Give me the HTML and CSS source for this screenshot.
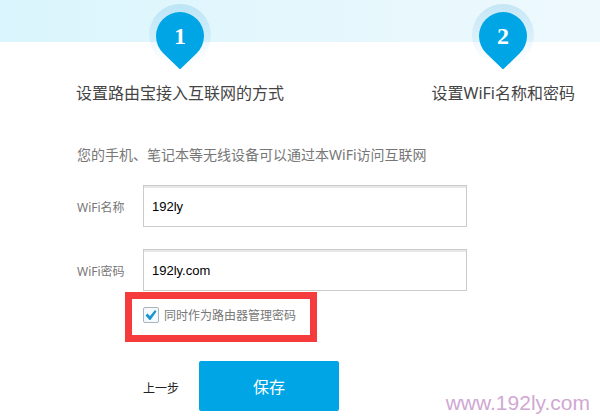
FILE: index.html
```
<!DOCTYPE html>
<html lang="zh-CN">
<head>
  <meta charset="UTF-8">
  <meta name="viewport" content="width=device-width, initial-scale=1.0">
  <title>设置WiFi名称和密码</title>
  <link rel="stylesheet" href="styles.css">
</head>
<body>
  <header class="steps">
    <div class="step">
      <svg class="pin" viewBox="0 0 62 66" aria-hidden="true">
        <defs>
          <linearGradient id="halo" x1="0" y1="0" x2="0" y2="1">
            <stop offset="0" stop-color="#0088d0" stop-opacity="0.16"/>
            <stop offset="1" stop-color="#0088d0" stop-opacity="0"/>
          </linearGradient>
        </defs>
        <circle cx="31" cy="31" r="31" fill="url(#halo)"/>
        <path d="M30 64.5 L14.5 49.5 A24 24 0 1 1 47.5 49.5 L32 64.5 Q31 65.5 30 64.5 Z" fill="#00a5e6"/>
        <text x="31" y="40" text-anchor="middle">1</text>
      </svg>
      <div class="step-name">设置路由宝接入互联网的方式</div>
    </div>
    <div class="step">
      <svg class="pin" viewBox="0 0 62 66" aria-hidden="true">
        <circle cx="31" cy="31" r="31" fill="url(#halo)"/>
        <path d="M30 64.5 L14.5 49.5 A24 24 0 1 1 47.5 49.5 L32 64.5 Q31 65.5 30 64.5 Z" fill="#00a5e6"/>
        <text x="31" y="40" text-anchor="middle">2</text>
      </svg>
      <div class="step-name">设置WiFi名称和密码</div>
    </div>
  </header>

  <form class="wifi-form">
    <p class="hint">您的手机、笔记本等无线设备可以通过本WiFi访问互联网</p>

    <div class="field">
      <label for="wifi-name">WiFi名称</label>
      <input type="text" id="wifi-name" value="192ly">
    </div>
    <div class="field">
      <label for="wifi-password">WiFi密码</label>
      <input type="text" id="wifi-password" value="192ly.com">
    </div>

    <label class="same-password">
      <input type="checkbox" checked>
      <span>同时作为路由器管理密码</span>
    </label>

    <div class="actions">
      <a class="back" href="#">上一步</a>
      <button class="save" type="button">保存</button>
      <span class="site">www.192ly.com</span>
    </div>
  </form>
</body>
</html>
```
FILE: styles.css
```
* {
  box-sizing: border-box;
}

body {
  margin: 0;
  font-family: "Noto Sans", "Noto Sans CJK SC", sans-serif;
  font-size: 12px;
  color: #777;
  background: #fff;
}

/* Steps */
.steps {
  display: flex;
  justify-content: space-between;
  padding: 4px 25px 0 76px;
  background: linear-gradient(to right, #daf5fd, #eef9fd) no-repeat;
  background-size: 100% 42px;
}

.step {
  display: flex;
  flex-direction: column;
  align-items: center;
}

.pin {
  width: 62px;
  height: 66px;
}

.pin text {
  font-family: "Liberation Serif", serif;
  font-size: 24px;
  font-weight: bold;
  fill: #fff;
}

.step-name {
  margin-top: 11px;
  font-size: 16px;
  line-height: 24px;
  color: #444;
  white-space: nowrap;
}

/* Form */
.wifi-form {
  padding: 39px 10px 0 77px;
}

.hint {
  margin: 0 0 19px;
  font-size: 14px;
  line-height: 22px;
}

.field {
  display: flex;
  align-items: center;
  margin-bottom: 22px;
}

.field label {
  width: 66px;
  padding-top: 2px;
}

.field input {
  flex: 1;
  max-width: 324px;
  height: 42px;
  padding: 0 8px;
  border: 1px solid #ccc;
  border-radius: 0;
  box-shadow: inset 0 2px 0 #e8e8e8;
  font-family: "Liberation Sans", sans-serif;
  font-size: 13px;
  color: #000;
  outline: none;
}

.same-password {
  display: flex;
  align-items: center;
  gap: 5px;
  width: fit-content;
  height: 50px;
  margin: -21px 0 19px 48px;
  padding: 0 14px 4px 11px;
  border: 7px solid #f53b3b;
}

.same-password input {
  appearance: none;
  width: 16px;
  height: 16px;
  margin: 0;
  border: 1px solid #aab4bb;
  border-radius: 2px;
  background: #f4fafd url("data:image/svg+xml,%3Csvg xmlns='http://www.w3.org/2000/svg' viewBox='0 0 14 14'%3E%3Cpath d='M1.5 7.5 L3.5 5.5 L6 8 L11 2 L12.5 3.5 L6.5 12 L5.5 12 Z' fill='%231b94cf'/%3E%3C/svg%3E") center / 14px no-repeat;
}

.actions {
  display: flex;
  align-items: flex-start;
  padding-left: 66px;
}

.back {
  width: 56px;
  padding-top: 19px;
  line-height: 18px;
  color: #222;
  text-decoration: none;
}

.save {
  width: 140px;
  height: 50px;
  border: 0;
  border-radius: 2px;
  background: #00a5e6;
  font-family: inherit;
  font-size: 16px;
  color: #fff;
  cursor: pointer;
}

.site {
  margin-left: auto;
  padding-top: 30px;
  font-family: "Liberation Sans", sans-serif;
  font-size: 21px;
  line-height: 24px;
  color: #cfa8d3;
}
```
